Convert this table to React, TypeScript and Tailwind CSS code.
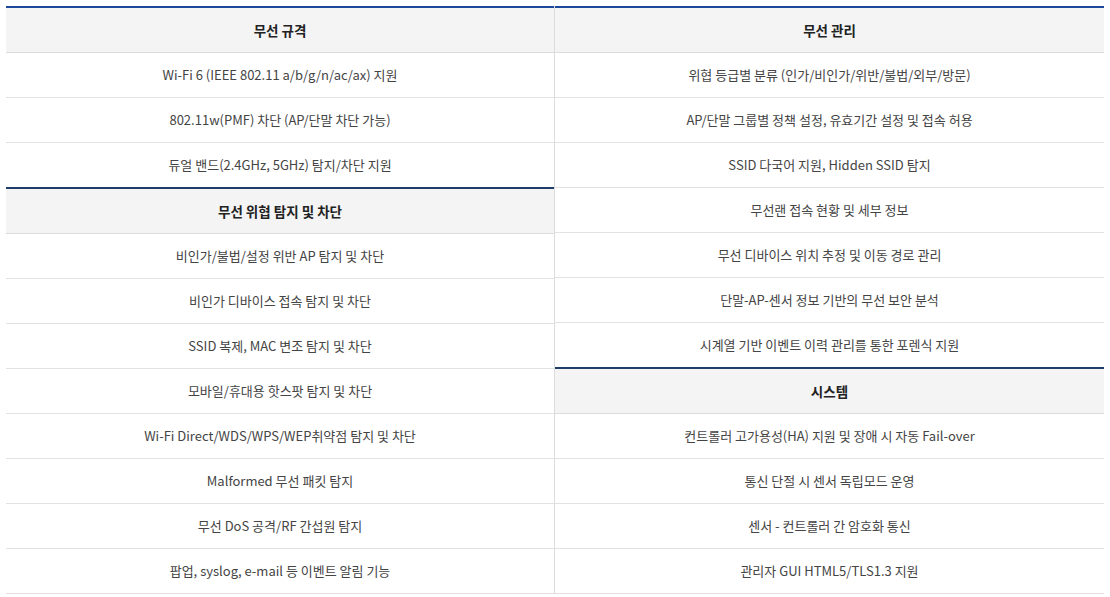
type Row = { text: string; head?: boolean }

const left: Row[] = [
  { text: "무선 규격", head: true },
  { text: "Wi-Fi 6 (IEEE 802.11 a/b/g/n/ac/ax) 지원" },
  { text: "802.11w(PMF) 차단 (AP/단말 차단 가능)" },
  { text: "듀얼 밴드(2.4GHz, 5GHz) 탐지/차단 지원" },
  { text: "무선 위협 탐지 및 차단", head: true },
  { text: "비인가/불법/설정 위반 AP 탐지 및 차단" },
  { text: "비인가 디바이스 접속 탐지 및 차단" },
  { text: "SSID 복제, MAC 변조 탐지 및 차단" },
  { text: "모바일/휴대용 핫스팟 탐지 및 차단" },
  { text: "Wi-Fi Direct/WDS/WPS/WEP취약점 탐지 및 차단" },
  { text: "Malformed 무선 패킷 탐지" },
  { text: "무선 DoS 공격/RF 간섭원 탐지" },
  { text: "팝업, syslog, e-mail 등 이벤트 알림 기능" },
]

const right: Row[] = [
  { text: "무선 관리", head: true },
  { text: "위협 등급별 분류 (인가/비인가/위반/불법/외부/방문)" },
  { text: "AP/단말 그룹별 정책 설정, 유효기간 설정 및 접속 허용" },
  { text: "SSID 다국어 지원, Hidden SSID 탐지" },
  { text: "무선랜 접속 현황 및 세부 정보" },
  { text: "무선 디바이스 위치 추정 및 이동 경로 관리" },
  { text: "단말-AP-센서 정보 기반의 무선 보안 분석" },
  { text: "시계열 기반 이벤트 이력 관리를 통한 포렌식 지원" },
  { text: "시스템", head: true },
  { text: "컨트롤러 고가용성(HA) 지원 및 장애 시 자동 Fail-over" },
  { text: "통신 단절 시 센서 독립모드 운영" },
  { text: "센서 - 컨트롤러 간 암호화 통신" },
  { text: "관리자 GUI HTML5/TLS1.3 지원" },
]

function Column({ rows, divider }: { rows: Row[]; divider?: boolean }) {
  return (
    <div className={divider ? "flex flex-col border-r border-[#dcdcdc]" : "flex flex-col"}>
      {rows.map((r, i) => {
        const beforeHead = rows[i + 1]?.head
        if (r.head) {
          return (
            <div
              key={i}
              className={`flex h-[47px] items-center justify-center border-t-2 border-b ${
                i === 0 ? "border-t-[#1b4798]" : "border-t-[#1f3d68]"
              } border-b-[#dcdcdc] bg-[#f4f4f4] text-[13.5px] font-bold text-[#222]`}
            >
              {r.text}
            </div>
          )
        }
        return (
          <div
            key={i}
            className={
              beforeHead
                ? "flex h-[44px] items-center justify-center text-[13px] text-[#444]"
                : "flex h-[45px] items-center justify-center border-b border-[#e2e2e2] text-[13px] text-[#444]"
            }
          >
            {r.text}
          </div>
        )
      })}
    </div>
  )
}

export default function App() {
  return (
    <div className="h-[597px] w-[1110px] bg-white pt-[6px] font-['Noto_Sans_CJK_KR','Noto_Sans',sans-serif]">
      <div className="ml-[6px] grid w-[1098px] grid-cols-2">
        <Column rows={left} divider />
        <Column rows={right} />
      </div>
    </div>
  )
}
